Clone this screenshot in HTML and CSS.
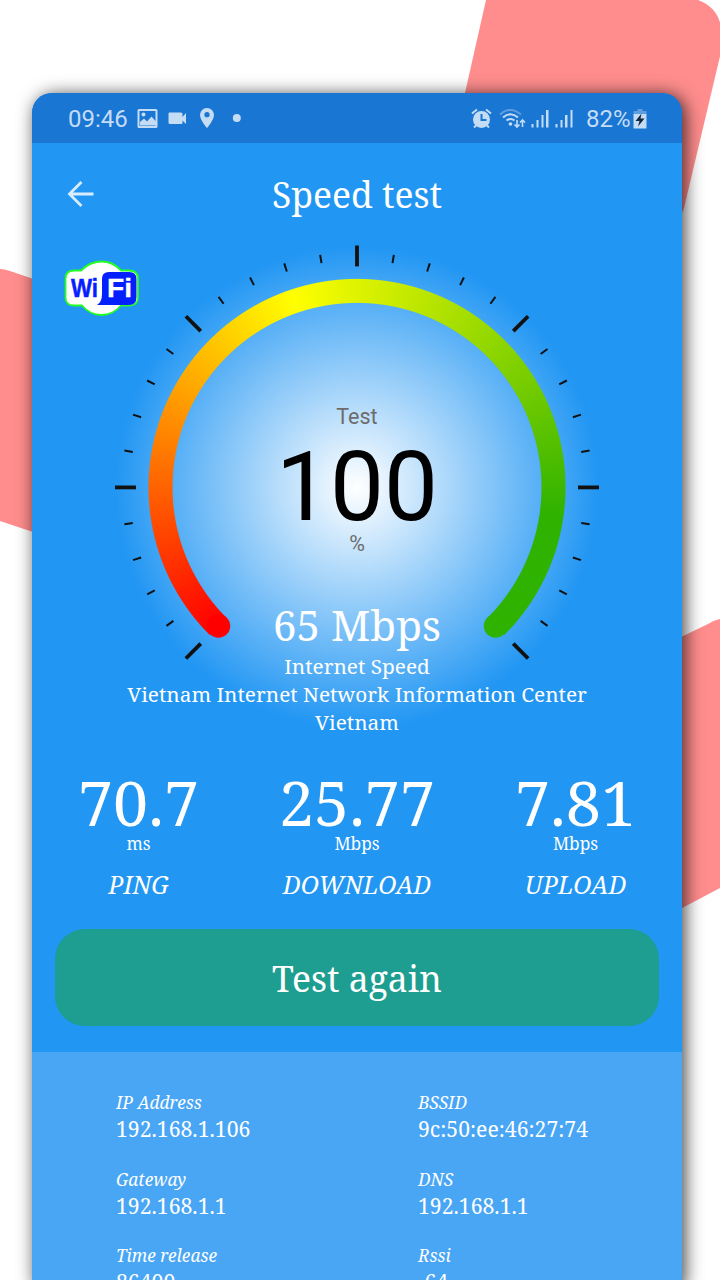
FILE: index.html
```html
<!DOCTYPE html>
<html lang="en">
<head>
    <meta charset="UTF-8">
    <meta name="viewport" content="width=device-width, initial-scale=1.0">
    <title>Speed test</title>
    <link rel="stylesheet" href="styles.css">
</head>
<body>
    <!-- Pink background shapes -->
    <svg class="backdrop" width="720" height="1280" viewBox="0 0 720 1280">
        <path d="M486 0H698Q717 7 721 26V52L684 208L660 270H425Z"/>
        <path d="M0 269Q4 269 10 271L60 288V541L0 521Z"/>
        <path d="M720 619Q714 620 708 624L650 652V925L720 888Z"/>
    </svg>

    <main class="phone">
        <div class="status-bar">
            <span class="clock">09:46</span>
            <svg class="status-left" width="110" height="24" viewBox="0 0 110 24">
                <path fill-rule="evenodd" d="M2 2H19Q20.500 2 20.500 3.500V19.500Q20.500 21 19 21H2Q.5 21 .5 19.500V3.500Q.5 2 2 2ZM2.500 4V19H18.500V4ZM3 18V15L7 11.500L10 14.500L14.500 9.500L18.500 14V18.500H3Z"/>
                <circle cx="6.500" cy="7.500" r="2"/>
                <path d="M32 5.500H44Q45.500 5.500 45.500 7V10L49 6V17L45.500 13.500V16Q45.500 17 44.500 17H33Q31.500 17 31.500 15.500V7Q31.500 5.500 32 5.500Z"/>
                <path fill-rule="evenodd" d="M70 1A7 7 0 0 1 77 8C77 13 70 21 70 21S63 13 63 8A7 7 0 0 1 70 1ZM70 5A2.600 2.600 0 1 0 70 10.300A2.600 2.600 0 1 0 70 5Z"/>
                <circle cx="99.800" cy="11" r="4"/>
            </svg>
            <svg class="status-right" width="106" height="24" viewBox="0 0 106 24">
                <!-- alarm -->
                <circle cx="10.500" cy="12.500" r="8.500"/>
                <path class="line" d="M1 6.500L6 2.500M20 6.500L15 2.500M5 18.500L3 20.500M16 18.500L18 20.500"/>
                <path class="cut" d="M10.500 7V13H15.500"/>
                <!-- wifi -->
                <path class="line faint" d="M29 7.500Q39 -1.500 50 7.500"/>
                <path class="line" d="M32 10.500Q39.500 4 47 10.500M35.500 13.500Q39.500 10.500 43.500 13.500"/>
                <circle cx="39.500" cy="17" r="1.800"/>
                <path class="arrows" d="M46 13V20M43.500 17.500L46 20L48.500 17.500M51.500 20V13M49 15.500L51.500 13L54 15.500"/>
                <!-- signal -->
                <path d="M60.500 17h2v3.500h-2zM65.500 13h2V20.500h-2zM70.500 8h2V20.500h-2zM75 3h2.500V20.500h-2.500zM84.500 17h2v3.500h-2zM89.500 13h2V20.500h-2zM94 8h2.500V20.500h-2.500zM99.500 3h2V20.500h-2z"/>
            </svg>
            <span class="percent">82%</span>
            <svg class="battery" width="14" height="22" viewBox="0 0 14 22">
                <path class="faint" d="M4.500 1H9.500V3H13.500V6H.5V3H4.500Z"/>
                <path d="M.5 6H13.500V20.500H.5Z"/>
                <path class="bolt" d="M8.500 5.500L2.500 13H6.500L5 18.500L11.500 10.500H7.500Z"/>
            </svg>
        </div>

        <header class="toolbar">
            <svg class="back" width="28" height="28" viewBox="0 0 28 28">
                <path d="M26.500 14H3M14.500 2L2.500 14L14.500 26"/>
            </svg>
            <h1>Speed test</h1>
        </header>

        <section class="gauge">
            <svg class="wifi-logo" width="76" height="58" viewBox="0 0 76 58">
                <path class="cloud" d="M10 10.500H17Q26 1.500 37.500 1.500T57 10.500H65Q74 10.500 74 18.500V37.500Q74 45.500 65 45.500H57Q49 55 37.500 55T18 45.500H10Q1.500 45.500 1.500 37.500V18.500Q1.500 10.500 10 10.500Z"/>
                <path class="patch" d="M45 12H65Q72.500 12 72.500 19V37Q72.500 45 65 45H33Q38 42 38 34V19Q38 12 45 12Z"/>
                <text class="wi" x="7" y="37" textLength="27" lengthAdjust="spacingAndGlyphs">Wi</text>
                <text class="fi" x="43" y="37" textLength="25" lengthAdjust="spacingAndGlyphs">Fi</text>
            </svg>
            <div class="glow"></div>
            <div class="ring"></div>
            <svg class="ticks" width="484" height="485" viewBox="-242 -242.400 484 485">
                <defs>
                    <path id="major" d="M0 -242V-221"/>
                    <g id="minor">
                        <path id="small" d="M0 -235.500V-227" transform="rotate(9)"/>
                        <use href="#small" transform="rotate(9)"/>
                        <use href="#small" transform="rotate(18)"/>
                        <use href="#small" transform="rotate(27)"/>
                    </g>
                </defs>
                <g class="majors">
                    <use href="#major" transform="rotate(-135)"/>
                    <use href="#major" transform="rotate(-90)"/>
                    <use href="#major" transform="rotate(-45)"/>
                    <use href="#major"/>
                    <use href="#major" transform="rotate(45)"/>
                    <use href="#major" transform="rotate(90)"/>
                    <use href="#major" transform="rotate(135)"/>
                </g>
                <g class="minors">
                    <use href="#minor" transform="rotate(-135)"/>
                    <use href="#minor" transform="rotate(-90)"/>
                    <use href="#minor" transform="rotate(-45)"/>
                    <use href="#minor"/>
                    <use href="#minor" transform="rotate(45)"/>
                    <use href="#minor" transform="rotate(90)"/>
                </g>
                <!-- round ends of the ring -->
                <circle cx="-138.600" cy="138.600" r="11.800" fill="#ff0000"/>
                <circle cx="138.600" cy="138.600" r="11.800" fill="#2fb200"/>
            </svg>
            <div class="readout">
                <div class="caption">Test</div>
                <div class="value">100</div>
                <div class="caption unit">%</div>
                <div class="speed">65 Mbps</div>
                <p>Internet Speed</p>
                <p>Vietnam Internet Network Information Center</p>
                <p>Vietnam</p>
            </div>
        </section>

        <section class="stats">
            <div class="stat">
                <div class="number">70.7</div>
                <div class="measure">ms</div>
                <div class="label">PING</div>
            </div>
            <div class="stat">
                <div class="number">25.77</div>
                <div class="measure">Mbps</div>
                <div class="label">DOWNLOAD</div>
            </div>
            <div class="stat">
                <div class="number">7.81</div>
                <div class="measure">Mbps</div>
                <div class="label">UPLOAD</div>
            </div>
        </section>

        <button class="again">Test again</button>

        <section class="details">
            <div class="detail"><em>IP Address</em><span>192.168.1.106</span></div>
            <div class="detail"><em>BSSID</em><span>9c:50:ee:46:27:74</span></div>
            <div class="detail"><em>Gateway</em><span>192.168.1.1</span></div>
            <div class="detail"><em>DNS</em><span>192.168.1.1</span></div>
            <div class="detail"><em>Time release</em><span>86400</span></div>
            <div class="detail"><em>Rssi</em><span>-64</span></div>
        </section>
    </main>
</body>
</html>
```

FILE: styles.css
```css
* {
    box-sizing: border-box;
}
body {
    margin: 0;
    width: 720px;
    height: 1280px;
    overflow: hidden;
    position: relative;
    background: #fff;
    color: #fff;
    font-family: "Noto Serif", "Droid Serif", "DejaVu Serif Condensed", "DejaVu Serif", serif;
}
h1, p {
    margin: 0;
    font-weight: normal;
}
.backdrop {
    position: absolute;
    top: 0;
    left: 0;
    fill: #ff8d8d;
}
.phone {
    position: relative;
    width: 650px;
    height: 1202px;
    margin: 93px 0 0 32px;
    border-radius: 20px;
    overflow: hidden;
    background: #2196f3;
    box-shadow: 3px 2px 18px rgba(0, 0, 0, 0.75);
}

/* status bar */
.status-bar {
    display: flex;
    align-items: center;
    height: 50px;
    padding: 2px 35px 0 36px;
    background: #1976d3;
    color: #c5dcf5;
    fill: #c5dcf5;
    font: 24px/48px Roboto, sans-serif;
}
.clock {
    width: 69px;
}
.status-right {
    margin-left: auto;
    margin-right: 9px;
}
.percent {
    width: 47px;
}
.line, .arrows, .cut {
    fill: none;
    stroke: #c5dcf5;
    stroke-width: 2;
}
.arrows {
    stroke-width: 1.6;
}
.cut {
    stroke: #1976d3;
}
.faint {
    opacity: 0.4;
}
.bolt {
    fill: #12283f;
}

/* toolbar */
.toolbar {
    position: relative;
    height: 102px;
    text-align: center;
}
.toolbar h1 {
    font-size: 35.5px;
    line-height: 103px;
}
.back {
    position: absolute;
    left: 34.5px;
    top: 37px;
    fill: none;
    stroke: #d8ecfd;
    stroke-width: 2.8;
}

/* gauge */
.gauge {
    position: relative;
    height: 525px;
}
.wifi-logo {
    position: absolute;
    z-index: 1;
    left: 32px;
    top: 15px;
    font-family: "Liberation Sans", Arial, sans-serif;
    font-weight: bold;
    font-size: 25px;
}
.cloud {
    fill: #fff;
    stroke: #22ff22;
    stroke-width: 1.8;
}
.patch, .wi {
    fill: #0520ff;
}
.wi {
    stroke: #0520ff;
    stroke-width: 0.5;
}
.fi {
    fill: #fff;
    stroke: #fff;
    stroke-width: 0.3;
}
.glow, .ticks {
    position: absolute;
    left: 83px;
    top: 0;
    width: 484px;
    height: 485px;
}
.glow {
    background: radial-gradient(circle 242px, #fff, #2196f3);
}
.ring {
    position: absolute;
    left: 116px;
    top: 33px;
    width: 418px;
    height: 419px;
    background: conic-gradient(from 225deg at 50% 209.4px, #f00 0deg, #ff0 116.5deg, #2fb200 233deg, #2fb200 270deg, transparent 270deg);
    -webkit-mask: radial-gradient(circle at 50% 209.4px, transparent 184px, #000 185px, #000 208px, transparent 209px);
    mask: radial-gradient(circle at 50% 209.4px, transparent 184px, #000 185px, #000 208px, transparent 209px);
}
.majors {
    stroke: #111;
    stroke-width: 3.8;
}
.minors {
    stroke: #111;
    stroke-width: 2;
}
.readout {
    position: relative;
    padding-top: 159px;
    text-align: center;
}
.caption {
    font: 21.5px/26px Roboto, sans-serif;
    color: #6c6c6c;
}
.value {
    font: 96px/114px Roboto, sans-serif;
    color: #000;
}
.unit {
    margin-top: -13px;
}
.speed {
    margin-top: 28px;
    font-size: 42px;
    line-height: 80px;
    height: 67px;
}
.readout p {
    font-size: 20.8px;
    line-height: 28px;
}

/* ping, download, upload */
.stats {
    display: grid;
    grid-template-columns: repeat(3, 218.5px);
    justify-content: center;
    text-align: center;
}
.number {
    font-size: 62.8px;
    line-height: 64px;
}
.measure {
    font-size: 17.3px;
    line-height: 20px;
}
.label {
    margin-top: 14.5px;
    font-size: 24.6px;
    line-height: 32px;
    font-style: italic;
}
.again {
    display: block;
    width: 604px;
    height: 97px;
    margin: 28.5px 23px 25.500px;
    border: 0;
    border-radius: 30px;
    background: #1d9e90;
    color: #fff;
    font-family: inherit;
    font-size: 35.5px;
}

/* network details */
.details {
    display: grid;
    grid-template-columns: 302px auto;
    grid-auto-rows: 76.5px;
    height: 260px;
    padding: 37.5px 0 0 84px;
    background: #49a6f5;
}
.detail em, .detail span {
    display: block;
}
.detail em {
    font-size: 17.3px;
    line-height: 27px;
}
.detail span {
    font-size: 21.2px;
    line-height: 25px;
}
```
